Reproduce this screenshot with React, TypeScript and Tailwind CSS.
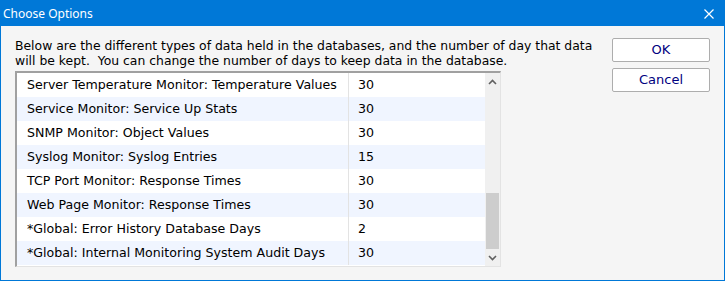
const rows: [string, string][] = [
  ["Server Temperature Monitor: Temperature Values", "30"],
  ["Service Monitor: Service Up Stats", "30"],
  ["SNMP Monitor: Object Values", "30"],
  ["Syslog Monitor: Syslog Entries", "15"],
  ["TCP Port Monitor: Response Times", "30"],
  ["Web Page Monitor: Response Times", "30"],
  ["*Global: Error History Database Days", "2"],
  ["*Global: Internal Monitoring System Audit Days", "30"],
];

function ScrollBar() {
  return (
    <div className="flex w-[15px] flex-col bg-[#f0f0f0]">
      <div className="flex h-[17px] items-center justify-center">
        <svg width="9" height="6" viewBox="0 0 9 6">
          <path d="M1 5 L4.5 1.5 L8 5" stroke="#606060" strokeWidth="1.6" fill="none" />
        </svg>
      </div>
      <div className="h-[103px]" />
      <div className="mx-[1px] h-[56px] bg-[#cdcdcd]" />
      <div className="flex flex-1 items-center justify-center">
        <svg width="9" height="6" viewBox="0 0 9 6">
          <path d="M1 1 L4.5 4.5 L8 1" stroke="#606060" strokeWidth="1.6" fill="none" />
        </svg>
      </div>
    </div>
  );
}

export default function App() {
  return (
    <div
      className="flex h-[281px] w-[725px] flex-col border border-[#0078d7] bg-[#f5f5f5] text-[12.6px] text-black"
      style={{ fontFamily: '"DejaVu Sans", Verdana, sans-serif' }}
    >
      <div className="flex h-[25px] items-center justify-between bg-[#0078d7] pl-[2px] pr-[10px] text-white">
        <span className="text-[12px]" style={{ fontFamily: '"Noto Sans", sans-serif' }}>
          Choose Options
        </span>
        <svg width="10" height="10" viewBox="0 0 10 10">
          <path d="M0.5 0.5 L9.5 9.5 M9.5 0.5 L0.5 9.5" stroke="white" strokeWidth="1.2" />
        </svg>
      </div>
      <div className="flex flex-1 pl-[14px] pr-[14px] pt-[12px]">
        <div className="flex w-[486px] flex-col">
          <p className="w-[585px] text-[12.4px] leading-[15px]">
            Below are the different types of data held in the databases, and the number of day that data will be kept.&nbsp; You can change the number of days to keep data in the database.
          </p>
          <div className="mt-[3px] flex h-[196px] border-l-2 border-t-2 border-b border-r border-l-[#a0a0a0] border-t-[#a0a0a0] border-b-[#e3e3e3] border-r-[#e3e3e3] bg-white">
            <div className="flex flex-1 flex-col">
              {rows.map(([name, days], i) => (
                <div
                  key={name}
                  className={`flex h-[24px] items-center ${i % 2 === 1 ? "bg-[#f0f5ff]" : "bg-white"}`}
                >
                  <div className="h-full w-[332px] border-r border-[#e3e3e3] pl-[10px] leading-[24px]">
                    {name}
                  </div>
                  <div className="pl-[9px]">{days}</div>
                </div>
              ))}
            </div>
            <ScrollBar />
          </div>
        </div>
        <div className="ml-auto flex flex-col gap-[6px]">
          <button className="h-[24px] w-[98px] rounded-[2px] border border-[#adadad] bg-white text-[13px] text-[#000080]">
            OK
          </button>
          <button className="h-[24px] w-[98px] rounded-[2px] border border-[#adadad] bg-white text-[13px] text-[#000080]">
            Cancel
          </button>
        </div>
      </div>
    </div>
  );
}
